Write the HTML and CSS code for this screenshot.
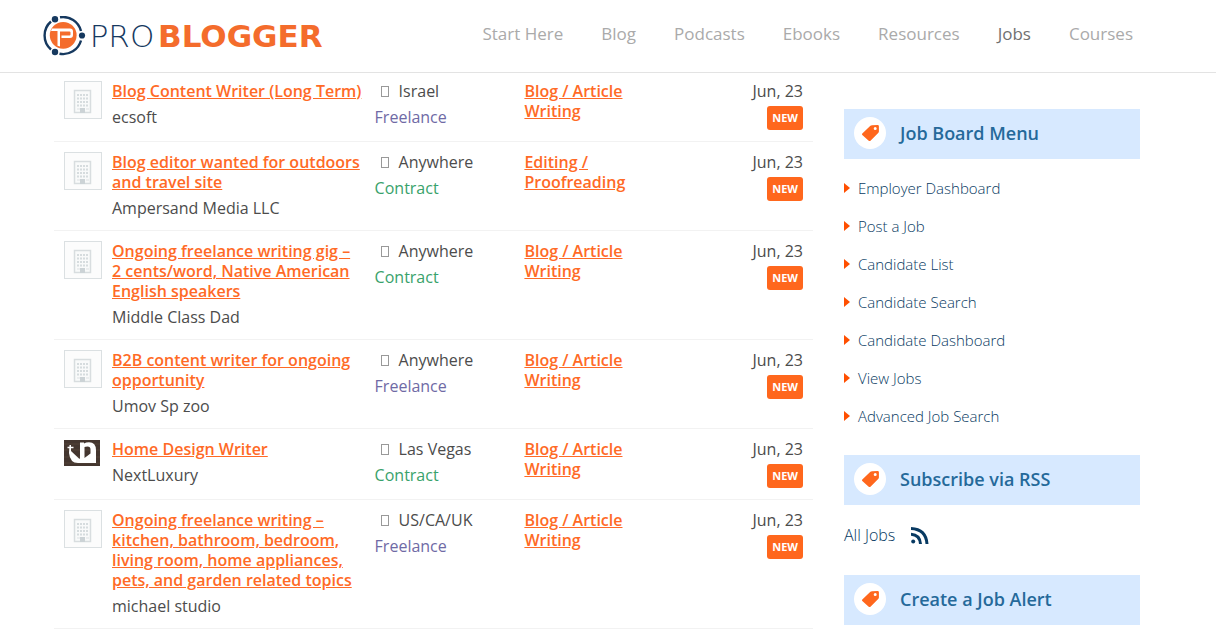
FILE: index.html
```html
<!DOCTYPE html>
<html lang="en">
<head>
    <meta charset="UTF-8">
    <meta name="viewport" content="width=device-width, initial-scale=1.0">
    <title>ProBlogger Jobs</title>
    <link rel="stylesheet" href="styles.css">
</head>
<body>

<!-- Shared icons -->
<svg class="sprite" aria-hidden="true">
    <symbol id="icon-building" viewBox="0 0 36 36">
        <path d="M9.500 8.500h16v22h-16z" fill="#f9fafa" stroke="#d8dddf" stroke-width="1.500"/>
        <path d="M12 13h12M12 16.500h12M12 20h12M12 23.500h12" stroke="#d6dcde" stroke-width="2" stroke-dasharray="2 1"/>
        <path d="M12 27h3M21 27h3" stroke="#dde1e3"/>
        <path d="M15 26h5v5h-5z" fill="#ccd3d6"/>
    </symbol>
    <symbol id="icon-tag" viewBox="0 0 32 32">
        <path fill-rule="evenodd" d="M8.300 16.500 16.400 8.800q.7-.6 1.600-.6l5.700-.2q1.200 0 1.200 1.200v5.300q0 .9-.7 1.600l-7.700 7.600q-.9.800-1.800 0l-6.400-5.600q-.8-.8 0-1.600zM22.700 11.500a1.500 1.500 0 1 0-3 0 1.500 1.500 0 0 0 3 0z" fill="#ff671d"/>
    </symbol>
</svg>

<header>
    <nav>
        <a class="logo" href="#">
            <svg class="logo-mark" viewBox="0 0 44 40" aria-hidden="true">
                <g fill="none" stroke="#16395f" stroke-width="2.400">
                    <path d="M18 1.300A18.500 18.500 0 0 1 39 15"/>
                    <path d="M39 24.500A18.500 18.500 0 0 1 17.500 37.700"/>
                    <path d="M9 33.500A18.500 18.500 0 0 1 9 5.500"/>
                </g>
                <g fill="#16395f">
                    <circle cx="13" cy="3.200" r="3.200"/>
                    <circle cx="40" cy="19.500" r="3.100"/>
                    <circle cx="13" cy="36" r="3.200"/>
                </g>
                <circle cx="21.200" cy="19.300" r="13.400" fill="#f46c2c"/>
                <path d="M10 12.500h18q3 0 3 3v3.500q0 3-3 3H19.500v-2.500h8q1 0 1-1v-2q0-1-1-1H18v15l-2.500-.8V15H9z" fill="#fff"/>
            </svg>
            <span class="logo-pro">PRO</span><span class="logo-blogger">BLOGGER</span>
        </a>
        <ul>
            <li><a href="#">Start Here</a></li>
            <li><a href="#">Blog</a></li>
            <li><a href="#">Podcasts</a></li>
            <li><a href="#">Ebooks</a></li>
            <li><a href="#">Resources</a></li>
            <li><a class="active" href="#">Jobs</a></li>
            <li><a href="#">Courses</a></li>
        </ul>
    </nav>
</header>

<main>
    <ul class="job-list">
        <li class="job">
            <svg class="job-logo"><use href="#icon-building"/></svg>
            <div class="job-title">
                <a href="#">Blog Content Writer (Long Term)</a>
                <p>ecsoft</p>
            </div>
            <div class="job-location">
                <p><span class="pin"></span>Israel</p>
                <p class="freelance">Freelance</p>
            </div>
            <div class="job-category"><a href="#">Blog / Article Writing</a></div>
            <div class="job-date">
                <p>Jun, 23</p>
                <span class="badge">NEW</span>
            </div>
        </li>
        <li class="job">
            <svg class="job-logo"><use href="#icon-building"/></svg>
            <div class="job-title">
                <a href="#">Blog editor wanted for outdoors and travel site</a>
                <p>Ampersand Media LLC</p>
            </div>
            <div class="job-location">
                <p><span class="pin"></span>Anywhere</p>
                <p class="contract">Contract</p>
            </div>
            <div class="job-category"><a href="#">Editing / Proofreading</a></div>
            <div class="job-date">
                <p>Jun, 23</p>
                <span class="badge">NEW</span>
            </div>
        </li>
        <li class="job">
            <svg class="job-logo"><use href="#icon-building"/></svg>
            <div class="job-title">
                <a href="#">Ongoing freelance writing gig – 2&nbsp;cents/word, Native American English speakers</a>
                <p>Middle Class Dad</p>
            </div>
            <div class="job-location">
                <p><span class="pin"></span>Anywhere</p>
                <p class="contract">Contract</p>
            </div>
            <div class="job-category"><a href="#">Blog / Article Writing</a></div>
            <div class="job-date">
                <p>Jun, 23</p>
                <span class="badge">NEW</span>
            </div>
        </li>
        <li class="job">
            <svg class="job-logo"><use href="#icon-building"/></svg>
            <div class="job-title">
                <a href="#">B2B content writer for ongoing opportunity</a>
                <p>Umov Sp zoo</p>
            </div>
            <div class="job-location">
                <p><span class="pin"></span>Anywhere</p>
                <p class="freelance">Freelance</p>
            </div>
            <div class="job-category"><a href="#">Blog / Article Writing</a></div>
            <div class="job-date">
                <p>Jun, 23</p>
                <span class="badge">NEW</span>
            </div>
        </li>
        <li class="job">
            <svg class="company-logo" viewBox="0 0 36 26" aria-hidden="true">
                <path d="M0 0h36v26H0z" fill="#44362f"/>
                <path d="M0 4h36M0 10h36M0 17h36M0 23h36" stroke="#524239"/>
                <path d="M5.500 5h1.500v6l8.500 8 .5-1V2.500h4v1q2-1.300 5-1.300 7 0 7 8V23H14q-8 0-9-10zM20.500 7v11l6-4.500V9.500q0-3-3-3-2 0-3 .5z" fill="#fff" fill-rule="evenodd"/>
                <path d="M3.500 7.500h6" stroke="#fff" stroke-width="1.500"/>
            </svg>
            <div class="job-title">
                <a href="#">Home Design Writer</a>
                <p>NextLuxury</p>
            </div>
            <div class="job-location">
                <p><span class="pin"></span>Las Vegas</p>
                <p class="contract">Contract</p>
            </div>
            <div class="job-category"><a href="#">Blog / Article Writing</a></div>
            <div class="job-date">
                <p>Jun, 23</p>
                <span class="badge">NEW</span>
            </div>
        </li>
        <li class="job">
            <svg class="job-logo"><use href="#icon-building"/></svg>
            <div class="job-title">
                <a href="#">Ongoing freelance writing – kitchen, bathroom, bedroom, living room, home appliances, pets, and garden related topics</a>
                <p>michael studio</p>
            </div>
            <div class="job-location">
                <p><span class="pin"></span>US/CA/UK</p>
                <p class="freelance">Freelance</p>
            </div>
            <div class="job-category"><a href="#">Blog / Article Writing</a></div>
            <div class="job-date">
                <p>Jun, 23</p>
                <span class="badge">NEW</span>
            </div>
        </li>
    </ul>

    <aside>
        <section>
            <h3><svg><use href="#icon-tag"/></svg>Job Board Menu</h3>
            <ul class="board-menu">
                <li><a href="#">Employer Dashboard</a></li>
                <li><a href="#">Post a Job</a></li>
                <li><a href="#">Candidate List</a></li>
                <li><a href="#">Candidate Search</a></li>
                <li><a href="#">Candidate Dashboard</a></li>
                <li><a href="#">View Jobs</a></li>
                <li><a href="#">Advanced Job Search</a></li>
            </ul>
        </section>
        <section>
            <h3><svg><use href="#icon-tag"/></svg>Subscribe via RSS</h3>
            <a class="rss" href="#">All Jobs
                <svg viewBox="0 0 18 17" aria-hidden="true">
                    <circle cx="2.200" cy="14.600" r="2" fill="#083a62"/>
                    <path d="M0 7.300q8.800.5 9.500 9.700M0 1.500q15 .7 16 15.500" fill="none" stroke="#083a62" stroke-width="3"/>
                </svg>
            </a>
        </section>
        <section>
            <h3><svg><use href="#icon-tag"/></svg>Create a Job Alert</h3>
        </section>
    </aside>
</main>

</body>
</html>
```
FILE: styles.css
```css
/* Root Variables */
:root {
    --orange: #ff671d;
    --link-orange: #ff6a26;
    --navy: #083a62;
    --heading-blue: #25699a;
    --panel-blue: #d7e9ff;
    --text-color: #4c4c4c;
}

* {
    margin: 0;
    padding: 0;
    box-sizing: border-box;
}

body {
    font-family: 'Open Sans', 'Liberation Sans', sans-serif;
    font-size: 16px;
    line-height: 20px;
    color: var(--text-color);
    background-color: white;
}

ul {
    list-style: none;
}

.sprite {
    position: absolute;
    width: 0;
    height: 0;
}

/* Header */
header {
    position: fixed;
    top: 0;
    width: 100%;
    z-index: 1000;
    background-color: white;
    border-bottom: 1px solid #e3e3e3;
}

nav {
    max-width: 1132px;
    height: 72px;
    margin: 0 auto;
    padding-right: 41px;
    display: flex;
    justify-content: space-between;
    align-items: center;
}

nav ul {
    display: flex;
    gap: 38px;
    padding-bottom: 4px;
}

nav a {
    font-size: 17px;
    color: #aaa;
    text-decoration: none;
}

nav a:hover,
nav a.active {
    color: #707070;
}

.logo {
    display: flex;
    align-items: center;
    font-family: 'DejaVu Sans', sans-serif;
    font-size: 31px;
}

.logo-mark {
    width: 44px;
    height: 40px;
}

.logo-pro {
    width: 72px;
    text-align: center;
    font-weight: 200;
    color: #16395f;
}

.logo-blogger {
    font-weight: 700;
    color: #f46c2c;
}

/* Job listings */
main {
    max-width: 1132px;
    margin: 0 auto;
    padding: 71px 34px 0 12px;
    display: flex;
    gap: 31px;
}

.job-list {
    flex: 1;
}

.job {
    display: grid;
    grid-template-columns: 48px 263fr 150fr 150fr 129fr;
    padding: 10px;
    border-bottom: 1px solid #f2f2f2;
}

.job-logo {
    width: 38px;
    height: 38px;
    border: 1px solid #dbe0e2;
    background-color: #fcfcfc;
}

.company-logo {
    width: 36px;
    height: 26px;
    margin-top: 1px;
}

.job-title {
    padding: 0 12px 2px 0;
}

.job-title a,
.job-category a {
    font-weight: 600;
    color: var(--link-orange);
}

.job-title p,
.job-location p + p {
    margin-top: 6px;
}

.pin {
    display: inline-block;
    width: 8px;
    height: 11px;
    margin: 0 10px 0 6px;
    border: 1px solid #999;
}

.freelance {
    color: #6f6aa5;
}

.contract {
    color: #39a26b;
}

.job-date {
    display: flex;
    flex-direction: column;
    align-items: flex-end;
    gap: 5px;
    padding-bottom: 1px;
}

.badge {
    padding: 0 5px;
    font-size: 11px;
    font-weight: 700;
    line-height: 24px;
    color: white;
    background-color: var(--orange);
    border-radius: 3px;
}

/* Sidebar */
aside {
    width: 296px;
    padding-top: 38px;
}

aside section {
    margin-bottom: 20px;
}

aside h3 {
    display: flex;
    align-items: center;
    gap: 14px;
    height: 50px;
    margin-bottom: 10px;
    padding: 0 10px 2px;
    font-size: 18px;
    font-weight: 600;
    color: var(--heading-blue);
    background-color: var(--panel-blue);
}

aside h3 svg {
    width: 32px;
    height: 32px;
    border-radius: 50%;
    background-color: white;
}

aside a {
    font-weight: 300;
    color: var(--navy);
    text-decoration: none;
}

.board-menu li {
    display: flex;
    align-items: center;
    gap: 8px;
    font-size: 15px;
    line-height: 38px;
}

.board-menu li::before {
    content: '';
    border: solid transparent;
    border-width: 5px 0 5px 6px;
    border-left-color: #ff4f00;
}

.rss {
    display: flex;
    align-items: center;
    gap: 16px;
    line-height: 40px;
}

.rss svg {
    width: 18px;
    height: 17px;
}

@media (max-width: 900px) {
    nav ul {
        display: none;
    }

    main {
        flex-direction: column;
    }

    aside {
        width: 100%;
    }
}
```
